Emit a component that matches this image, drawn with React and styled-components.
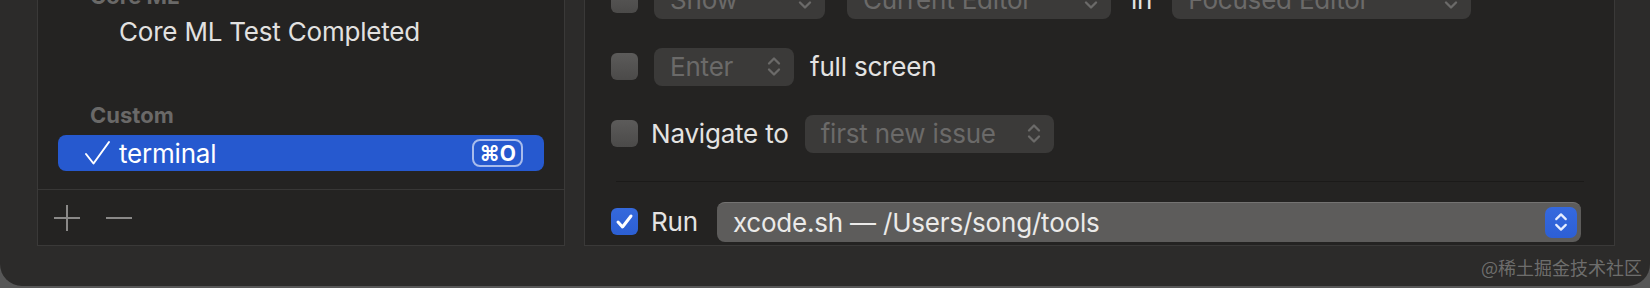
import React from "react";
import styled, { createGlobalStyle } from "styled-components";

const GlobalStyle = createGlobalStyle`
  html, body {
    margin: 0;
    padding: 0;
    background: #575757;
  }
  body {
    font-family: Inter, "Noto Sans", "Liberation Sans", sans-serif;
    -webkit-font-smoothing: antialiased;
  }
`;

const Window = styled.div`
  position: relative;
  height: 286px;
  overflow: hidden;
  background: #2c2b2a;
  border-radius: 0 0 22px 22px;
  display: flex;
  flex-direction: column;
  justify-content: flex-end;
`;

const Panels = styled.div`
  flex: none;
  height: 320px;
  display: flex;
  gap: 19px;
  padding: 0 35px 40px 37px;
  box-sizing: border-box;
`;

const Panel = styled.div`
  box-sizing: border-box;
  border: 1px solid #3a3938;
  background: #242322;
  display: flex;
  flex-direction: column;
`;

const ListPanel = styled(Panel)`
  width: 528px;
`;

const SettingsPanel = styled(Panel)`
  flex: 1;
  justify-content: flex-end;
`;

const List = styled.div`
  flex: 1;
  display: flex;
  flex-direction: column;
  justify-content: flex-end;
  padding-bottom: 18px;
  overflow: hidden;
`;

const SectionHeader = styled.div`
  flex: none;
  height: ${(p) => p.$h || 36}px;
  margin: ${(p) => p.$space || 0}px 20px 0;
  padding-left: 32px;
  display: flex;
  align-items: center;
  font-size: 22px;
  font-weight: 700;
  color: #6a6968;
`;

const Item = styled.div`
  flex: none;
  height: 36px;
  margin: 2px 20px 0;
  padding-right: 21px;
  display: flex;
  align-items: center;
  border-radius: 8px;
  background: ${(p) => (p.$selected ? "#2659cf" : "transparent")};
`;

const CheckSlot = styled.div`
  width: 61px;
  flex: none;
  padding-left: 26px;
  box-sizing: border-box;
  display: flex;
  align-items: center;
`;

const ItemLabel = styled.span`
  flex: 1;
  font-size: 26px;
  color: ${(p) => (p.$selected ? "#ffffff" : "#e2e1e0")};
  letter-spacing: -0.2px;
`;

const Shortcut = styled.span`
  flex: none;
  height: 28px;
  box-sizing: border-box;
  padding: 0 5px;
  display: flex;
  align-items: center;
  border: 2px solid rgba(255, 255, 255, 0.6);
  border-radius: 8px;
  font-size: 21px;
  font-weight: 700;
  color: #ffffff;
`;

const Toolbar = styled.div`
  flex: none;
  height: 55px;
  border-top: 1px solid #383736;
  display: flex;
  align-items: center;
  gap: 24px;
  padding-left: 15px;
`;

const ToolButton = styled.div`
  width: 28px;
  height: 28px;
  display: flex;
  align-items: center;
  justify-content: center;
`;

const Row = styled.div`
  flex: none;
  height: ${(p) => p.$h || 67}px;
  display: flex;
  align-items: center;
  gap: ${(p) => p.$gap || 16}px;
  padding-left: 26px;
`;

const Checkbox = styled.div`
  flex: none;
  width: 27px;
  height: 27px;
  box-sizing: border-box;
  border-radius: 6px;
  display: flex;
  align-items: center;
  justify-content: center;
  margin-right: ${(p) => p.$after || 0}px;
  background: ${(p) =>
    p.$checked
      ? "linear-gradient(#3569dc, #2c5fd3)"
      : "linear-gradient(#5c5b5a, #4b4a49)"};
`;

const Label = styled.span`
  flex: none;
  font-size: 26px;
  color: #e4e3e2;
  letter-spacing: -0.2px;
  margin-left: ${(p) => p.$shift || 0}px;
`;

const Popup = styled.div`
  flex: none;
  width: ${(p) => p.$w}px;
  height: ${(p) => (p.$active ? 40 : 38)}px;
  box-sizing: border-box;
  border-radius: 8px;
  padding: 0 ${(p) => (p.$active ? 4 : 12)}px 0 16px;
  display: flex;
  align-items: center;
  justify-content: space-between;
  background: ${(p) => (p.$active ? "#5d5c5b" : "#3b3a39")};
  border-top: ${(p) => (p.$active ? "1px solid #747372" : "none")};
  font-size: 26px;
  letter-spacing: -0.2px;
  color: ${(p) => (p.$active ? "#ebeae9" : "#6b6a69")};
  margin-left: ${(p) => p.$shift || 0}px;
`;

const Stepper = styled.div`
  width: 32px;
  height: 31px;
  border-radius: 7px;
  background: linear-gradient(#3569de, #2d5fd5);
  display: flex;
  align-items: center;
  justify-content: center;
`;

const Divider = styled.div`
  flex: none;
  height: 1px;
  background: #1b1a19;
  margin: 14px 30px 16px 31px;
`;

const Watermark = styled.div`
  position: absolute;
  right: 8px;
  bottom: 8px;
  font-family: "Noto Sans CJK SC", "Noto Sans", sans-serif;
  font-size: 18px;
  line-height: 22px;
  color: rgba(255, 255, 255, 0.32);
`;

const Chevrons = ({ color = "#6b6a69", w = 16, h = 23 }) => (
  <svg width={w} height={h} viewBox="0 0 16 23" fill="none">
    <path
      d="M3 8.5 L8 3.5 L13 8.5 M3 14.5 L8 19.5 L13 14.5"
      stroke={color}
      strokeWidth="2.3"
      strokeLinecap="round"
      strokeLinejoin="round"
    />
  </svg>
);

const TickMark = () => (
  <svg width="27" height="26" viewBox="0 0 27 26" fill="none">
    <path
      d="M2 14 L9.5 23.5 L25 2"
      stroke="#ffffff"
      strokeWidth="2"
      strokeLinecap="round"
      strokeLinejoin="round"
    />
  </svg>
);

const BoxCheck = () => (
  <svg width="19" height="17" viewBox="0 0 19 17" fill="none">
    <path
      d="M3 9 L7.5 14 L16 3"
      stroke="#ffffff"
      strokeWidth="3"
      strokeLinecap="round"
      strokeLinejoin="round"
    />
  </svg>
);

const Plus = () => (
  <svg width="28" height="28" viewBox="0 0 28 28">
    <path d="M14 1 V27 M1 14 H27" stroke="#8a8988" strokeWidth="2" />
  </svg>
);

const Minus = () => (
  <svg width="28" height="28" viewBox="0 0 28 28">
    <path d="M1 14 H27" stroke="#8a8988" strokeWidth="2" />
  </svg>
);

export default function App() {
  return (
    <>
      <GlobalStyle />
      <Window>
        <Panels>
          <ListPanel>
            <List>
              <SectionHeader $h={30}>Core ML</SectionHeader>
              <Item>
                <CheckSlot />
                <ItemLabel>Core ML Test Completed</ItemLabel>
              </Item>
              <SectionHeader $space={48}>Custom</SectionHeader>
              <Item $selected>
                <CheckSlot>
                  <TickMark />
                </CheckSlot>
                <ItemLabel $selected>terminal</ItemLabel>
                <Shortcut>⌘O</Shortcut>
              </Item>
            </List>
            <Toolbar>
              <ToolButton>
                <Plus />
              </ToolButton>
              <ToolButton>
                <Minus />
              </ToolButton>
            </Toolbar>
          </ListPanel>

          <SettingsPanel>
            <Row $gap={20}>
              <Checkbox $after={-4} />
              <Popup $w={171}>
                Show
                <Chevrons />
              </Popup>
              <Popup $w={264} $shift={2}>
                Current Editor
                <Chevrons />
              </Popup>
              <Label>in</Label>
              <Popup $w={299}>
                Focused Editor
                <Chevrons />
              </Popup>
            </Row>
            <Row>
              <Checkbox />
              <Popup $w={140}>
                Enter
                <Chevrons />
              </Popup>
              <Label>full screen</Label>
            </Row>
            <Row>
              <Checkbox />
              <Label $shift={-3}>Navigate to</Label>
              <Popup $w={249}>
                first new issue
                <Chevrons />
              </Popup>
            </Row>
            <Divider />
            <Row $h={47}>
              <Checkbox $checked>
                <BoxCheck />
              </Checkbox>
              <Label $shift={-3}>Run</Label>
              <Popup $w={864} $active $shift={3}>
                xcode.sh — /Users/song/tools
                <Stepper>
                  <Chevrons color="#e6edff" w={16} h={22} />
                </Stepper>
              </Popup>
            </Row>
          </SettingsPanel>
        </Panels>
        <Watermark>@稀土掘金技术社区</Watermark>
      </Window>
    </>
  );
}
